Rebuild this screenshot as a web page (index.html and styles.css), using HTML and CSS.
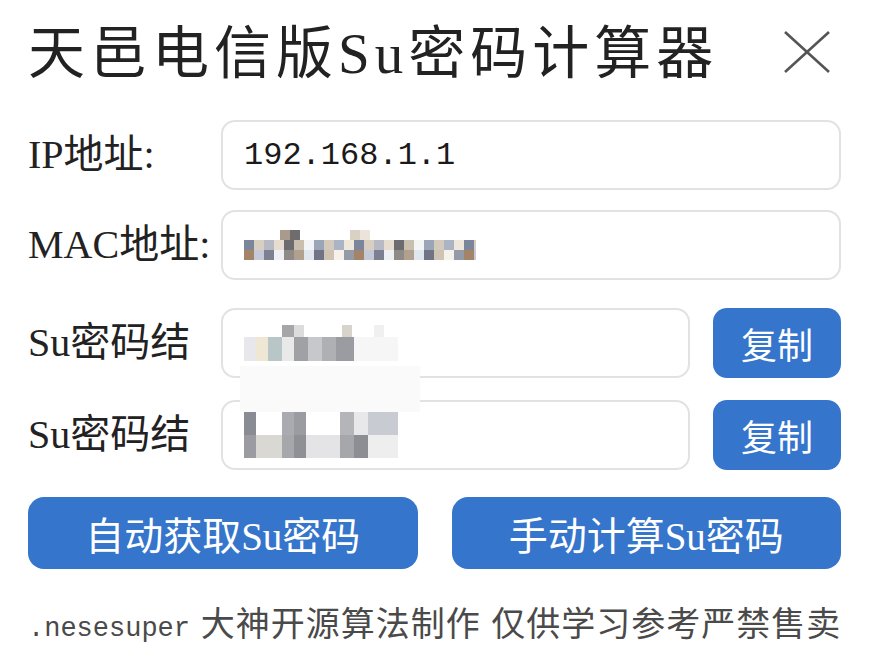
FILE: index.html
```html
<!DOCTYPE html>
<html lang="zh-CN">
<head>
  <meta charset="UTF-8" />
  <meta name="viewport" content="width=device-width, initial-scale=1.0"/>
  <title>天邑电信版Su密码计算器</title>
  <link rel="stylesheet" href="styles.css">
</head>
<body>
  <div class="panel">
    <div class="header">
      <h1>天邑电信版Su密码计算器</h1>
      <svg class="close" width="48" height="44" viewBox="0 0 48 44">
        <path d="M2 2 L46 42 M46 2 L2 42" stroke="#555" stroke-width="2.6" fill="none"/>
      </svg>
    </div>

    <div class="row">
      <div class="label">IP地址:</div>
      <div class="field"><span class="value">192.168.1.1</span></div>
    </div>

    <div class="row">
      <div class="label">MAC地址:</div>
      <div class="field"><span class="mosaic mac"></span></div>
    </div>

    <div class="row">
      <div class="label">Su密码结</div>
      <div class="field short">
        <span class="mosaic su1"></span>
        <span class="smear"></span>
      </div>
      <button class="copy-btn">复制</button>
    </div>

    <div class="row">
      <div class="label">Su密码结</div>
      <div class="field short"><span class="mosaic su2"></span></div>
      <button class="copy-btn">复制</button>
    </div>

    <div class="actions">
      <button class="big-btn">自动获取Su密码</button>
      <button class="big-btn">手动计算Su密码</button>
    </div>

    <div class="footer"><span class="mono">.nesesuper</span> 大神开源算法制作 仅供学习参考严禁售卖</div>
  </div>
</body>
</html>
```

FILE: styles.css
```css
body {
  margin: 0;
  background-color: #fff;
  font-family: "Liberation Serif", "Noto Sans CJK SC", serif;
  color: #222;
}

.panel {
  padding: 0 33px 0 28px;
}

.header {
  display: flex;
  align-items: center;
  justify-content: space-between;
  height: 106px;
}

h1 {
  margin: 0;
  font-size: 57px;
  font-weight: normal;
  letter-spacing: 5px;
  line-height: 1;
  color: #222;
}

.close {
  margin-right: 10px;
  margin-top: -2px;
}

.row {
  display: flex;
  align-items: center;
  height: 70px;
  margin-top: 14px;
  margin-bottom: 5px;
}

.row + .row {
  margin-top: 20px;
}

.row:nth-child(4) {
  margin-top: 28px;
}

.row:nth-child(5) {
  margin-top: 22px;
}

.label {
  width: 193px;
  flex-shrink: 0;
  font-size: 40px;
  line-height: 1;
  color: #222;
}

.field {
  flex: 1;
  height: 66px;
  border: 2px solid #e2e2e2;
  border-radius: 14px;
  display: flex;
  align-items: center;
  padding-left: 21px;
  position: relative;
}

.value {
  font-family: "Liberation Mono", "Noto Sans CJK SC", monospace;
  font-size: 32px;
  color: #1a1a1a;
}

.copy-btn {
  width: 128px;
  height: 70px;
  margin-left: 23px;
  flex-shrink: 0;
  border: none;
  border-radius: 14px;
  background-color: #3575cc;
  color: #fff;
  font-family: "Noto Sans CJK SC", sans-serif;
  font-size: 36px;
  cursor: pointer;
}

.mosaic {
  display: inline-block;
}

/* pixelated (blurred out) values, one gradient strip per mosaic row */
.mac {
  width: 232px;
  height: 30px;
  background:
    linear-gradient(90deg, transparent 0 36px, #a89a8c 36px 46px, #6f6c6e 46px 56px, transparent 56px 106px, #d9d2c4 106px 116px, #eae4da 116px 126px, transparent 126px 232px) 0 0 / 100% 10px no-repeat,
    repeating-linear-gradient(90deg, #7b869c 0 10px, #d8cfc0 10px 20px, #b7b9c4 20px 30px, #e6ddd0 30px 40px, #6b6b70 40px 50px, #c9bfae 50px 60px, #f2f4f6 60px 70px, #9aa6b8 70px 80px, #d4cabc 80px 90px, #aab4c4 90px 100px, #efe7da 100px 110px) 0 10px / 100% 10px no-repeat,
    repeating-linear-gradient(90deg, #a48468 0 10px, #c6cad8 10px 20px, #7c8090 20px 30px, #eef0f4 30px 40px, #8e8a86 40px 50px, #b2a08e 50px 60px, #dfe6ee 60px 70px, #6f7384 70px 80px, #cfc4b4 80px 90px, #f6f2ea 90px 100px, #939ba8 100px 110px) 0 20px / 100% 10px no-repeat;
}

.su1 {
  width: 154px;
  height: 36px;
  background:
    linear-gradient(90deg, transparent 0 38px, #a4a6aa 38px 50px, #dcdcdc 50px 60px, transparent 60px 98px, #d8d4cc 98px 108px, transparent 108px 130px, #f0f0f0 130px 140px, transparent 140px 154px) 0 0 / 100% 12px no-repeat,
    linear-gradient(90deg, #e7e7ec 0 12px, #efe6d4 12px 24px, #b9c6c8 24px 38px, #e9e9e9 38px 50px, #a0a1a5 50px 64px, #c6c8cc 64px 78px, #aeb0b4 78px 92px, #9a9ca2 92px 110px, #f6f6f6 110px 154px) 0 12px / 100% 24px no-repeat;
}

.su2 {
  width: 154px;
  height: 46px;
  background:
    linear-gradient(90deg, #8a8c94 0 12px, #ffffff 12px 38px, #a9abb0 38px 50px, #9a9ca2 50px 62px, #ffffff 62px 96px, #b3b5b8 96px 110px, #e8e8ea 110px 124px, #c8ccd2 124px 154px) 0 0 / 100% 23px no-repeat,
    linear-gradient(90deg, #9a9ca2 0 12px, #dad8d2 12px 38px, #a6a7ab 38px 50px, #8e9096 50px 62px, #e4e4e6 62px 96px, #a6a7ab 96px 110px, #8c8e94 110px 124px, #eeeeee 124px 154px) 0 23px / 100% 23px no-repeat;
}

.smear {
  position: absolute;
  left: 17px;
  top: 56px;
  width: 180px;
  height: 46px;
  background-color: #fafafa;
  z-index: 2;
}

.actions {
  display: flex;
  gap: 34px;
  margin-top: 27px;
}

.big-btn {
  flex: 1;
  height: 72px;
  border: none;
  border-radius: 16px;
  background-color: #3575cc;
  color: #fff;
  font-family: "Liberation Serif", "Noto Sans CJK SC", serif;
  font-size: 39px;
  cursor: pointer;
}

.footer {
  margin-top: 36px;
  margin-left: 0;
  font-family: "Noto Sans CJK SC", sans-serif;
  font-size: 34px;
  letter-spacing: 1px;
  word-spacing: 2px;
  color: #4a4a4a;
  white-space: nowrap;
  line-height: 1;
}

.mono {
  font-family: "Liberation Mono", monospace;
  font-size: 27px;
  letter-spacing: 0;
}
```
